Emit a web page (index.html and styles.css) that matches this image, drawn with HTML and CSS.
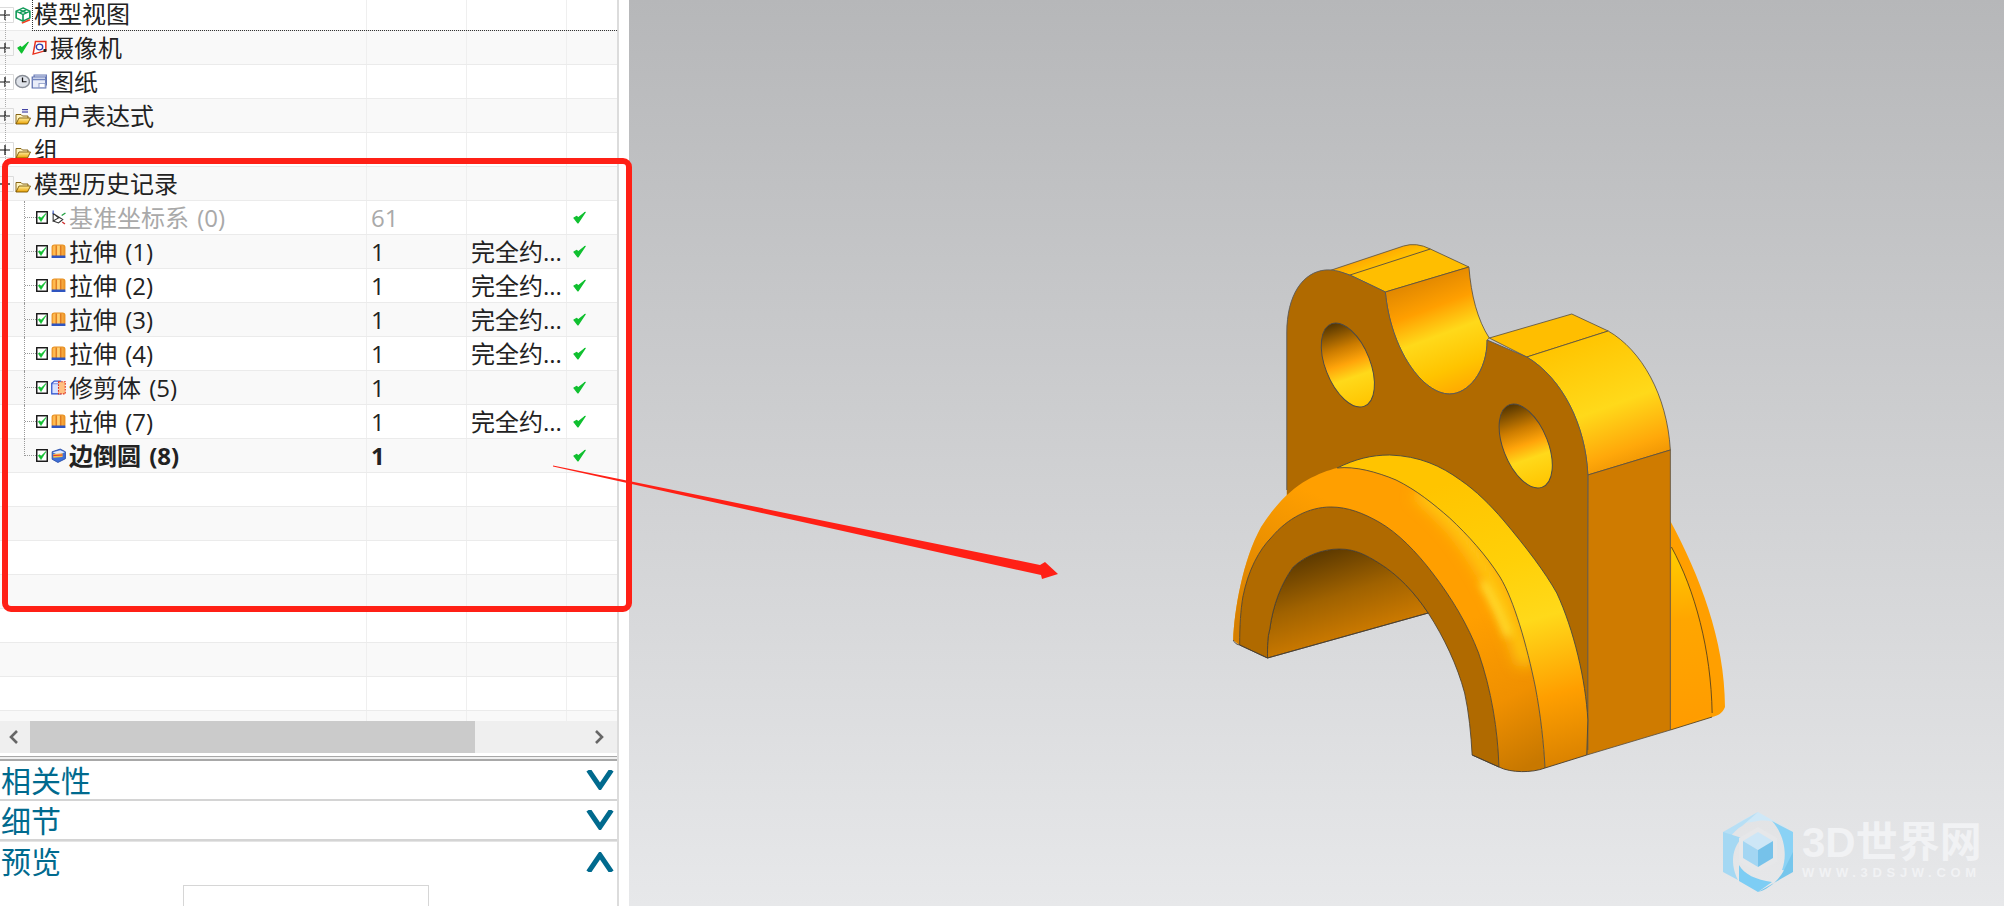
FILE: index.html
```html
<!DOCTYPE html>
<html lang="zh">
<head>
<meta charset="utf-8">
<title>模型历史记录</title>
<link rel="stylesheet" href="styles.css">
</head>
<body>
<svg class="defs" width="0" height="0" aria-hidden="true">
  <defs>
    <linearGradient id="folderG" x1="0" y1="0" x2="0" y2="1"><stop offset="0" stop-color="#fff0a0"/><stop offset="1" stop-color="#eaa000"/></linearGradient>
    <linearGradient id="extrudeG" x1="0" y1="0" x2="1" y2="0"><stop offset="0" stop-color="#ffb040"/><stop offset=".5" stop-color="#ffd070"/><stop offset="1" stop-color="#f09020"/></linearGradient>
    <symbol id="i-plus" viewBox="0 0 14 16" preserveAspectRatio="none"><path d="M13.500 .5H0M13.500 .5V15.500M13.500 15.500H0" fill="none" stroke="#dcdcdc"/><path d="M0 8H10M5 3V13" stroke="#111" stroke-width="1.200" fill="none"/></symbol>
    <symbol id="i-minus" viewBox="0 0 14 16" preserveAspectRatio="none"><path d="M13.500 .5H0M13.500 .5V15.500M13.500 15.500H0" fill="none" stroke="#dcdcdc"/><path d="M0 8H10" stroke="#111" stroke-width="1.200" fill="none"/></symbol>
    <symbol id="i-cube" viewBox="0 0 14 18" preserveAspectRatio="none"><path d="M7 1L13 4.500V11.500L7 15L1 11.500V4.500ZM1 4.500L7 8L13 4.500M7 8V15M4 2.800L10 6.200M10 2.800L4 6.200" fill="none" stroke="#109a58" stroke-width="1.400"/><path d="M6 17L13 13.500" stroke="#f04020" stroke-width="1.600"/></symbol>
    <symbol id="i-check" viewBox="0 0 10 12" preserveAspectRatio="none"><path d="M.8 6.500L3.800 11L9.300 1.200L4 6.500L2.800 5Z" fill="#10c030" stroke="#10c030" stroke-width="1.100" stroke-linejoin="round"/></symbol>
    <symbol id="i-camera" viewBox="0 0 13 15" preserveAspectRatio="none"><path d="M3 1.500H12V10.500L1 14Z" fill="#fff" stroke="#e8301c" stroke-width="1.300"/><circle cx="6.500" cy="7" r="2.800" fill="none" stroke="#3040b0" stroke-width="1.200"/><path d="M10 9H12.500V12H10Z" fill="#222"/></symbol>
    <symbol id="i-clock" viewBox="0 0 13 15" preserveAspectRatio="none"><circle cx="6.500" cy="7.500" r="6" fill="#dfe3ea" stroke="#8a8f98" stroke-width="1.300"/><path d="M6.500 3.500V7.800H10" fill="none" stroke="#111" stroke-width="1.100"/></symbol>
    <symbol id="i-sheet" viewBox="0 0 13 15" preserveAspectRatio="none"><rect x="2.500" y="1" width="10" height="10" fill="#dfe4f4" stroke="#6d7fb8"/><rect x="1" y="3" width="11" height="11" fill="#e9edf9" stroke="#5a6eae"/><path d="M1 5.500H12" stroke="#7285bf" stroke-width="1.500"/><rect x="6.500" y="9.500" width="5" height="4" fill="#fff" stroke="#8d9bc8" stroke-width=".8"/></symbol>
    <symbol id="i-folder" viewBox="0 0 16 12" preserveAspectRatio="none"><path d="M1 11V1.500H6L7.500 3H13V5" fill="#fff4c0" stroke="#7a5600" stroke-width=".9" stroke-linejoin="round"/><path d="M1 11L4 5H15.500L12.500 11Z" fill="url(#folderG)" stroke="#7a5600" stroke-width=".9" stroke-linejoin="round"/></symbol>
    <symbol id="i-folder-x" viewBox="0 0 16 16" preserveAspectRatio="none"><path d="M7 .7H13M7 3H13" stroke="#1a1a90" stroke-width="1"/><path d="M1 15V5.500H6L7.500 7H13V9" fill="#fff4c0" stroke="#7a5600" stroke-width=".9" stroke-linejoin="round"/><path d="M1 15L4 9H15.500L12.500 15Z" fill="url(#folderG)" stroke="#7a5600" stroke-width=".9" stroke-linejoin="round"/></symbol>
    <symbol id="i-box" viewBox="0 0 12 13" preserveAspectRatio="none"><rect x=".75" y=".75" width="10.500" height="11.500" fill="#fff" stroke="#111" stroke-width="1.400"/><path d="M2.300 6.500L5 10.500L10 2.500L5 7.300L3.800 5.800Z" fill="#10c030" stroke="#10c030" stroke-width=".7" stroke-linejoin="round"/></symbol>
    <symbol id="i-datum" viewBox="0 0 14 15" preserveAspectRatio="none"><path d="M2 3.500V11L7 8ZM2 3.500L11 9.500L7 13L2 11" fill="none" stroke="#333" stroke-width="1"/><path d="M2 4V0.500" stroke="#3050c0"/><path d="M10 5.500L13.500 3" stroke="#20a040" stroke-width="1.200"/><path d="M10.500 12L13 14" stroke="#d03030" stroke-width="1.300"/></symbol>
    <symbol id="i-extrude" viewBox="0 0 13 15" preserveAspectRatio="none"><rect x="1" y="1" width="11" height="11.500" rx="2" fill="url(#extrudeG)" stroke="#e89020"/><path d="M4.500 1.500V12M8.500 1.500V12" stroke="#d96a10"/><path d="M.5 11.500H12.500V14H.5Z" fill="#2f55c0"/></symbol>
    <symbol id="i-trim" viewBox="0 0 14 13" preserveAspectRatio="none"><rect x=".7" y="3" width="8" height="9" fill="#d8e2ff" stroke="#3358d0" stroke-width="1.200"/><path d="M.7 3L3 1H9V3" fill="#eef" stroke="#3358d0"/><rect x="7" y="1.500" width="6.300" height="10.500" fill="#ffc080" stroke="#e03020" stroke-width="1" stroke-dasharray="1.500 1"/></symbol>
    <symbol id="i-blend" viewBox="0 0 13 14" preserveAspectRatio="none"><path d="M1 3.500L8 1L12.500 3.500V10L6 13.500L1 10.500Z" fill="#3e6fd8" stroke="#2a4fa8" stroke-width=".8"/><path d="M1.500 4L8 2L12 4L6 6.500Z" fill="#dfe8ff"/><path d="M2 5.500L10 5V8.500L2 9Z" fill="#f6c24a"/><path d="M2 7L10 6.500" stroke="#e83030" stroke-width="1"/></symbol>
  </defs>
</svg>

<div class="app">
  <aside class="panel">
    <section class="tree">
      <div class="row row-first">
        <div class="cell name top"><svg class="exp"><use href="#i-plus"/></svg><svg class="ic-cube"><use href="#i-cube"/></svg><span class="label">模型视图</span></div><div class="cell"></div><div class="cell"></div><div class="cell last"></div>
      </div>
      <div class="row odd">
        <div class="cell name top"><svg class="exp"><use href="#i-plus"/></svg><svg class="tick-lg"><use href="#i-check"/></svg><svg class="ic-cam"><use href="#i-camera"/></svg><span class="label">摄像机</span></div><div class="cell"></div><div class="cell"></div><div class="cell last"></div>
      </div>
      <div class="row">
        <div class="cell name top"><svg class="exp"><use href="#i-plus"/></svg><svg class="ic-clock"><use href="#i-clock"/></svg><svg class="ic-sheet"><use href="#i-sheet"/></svg><span class="label">图纸</span></div><div class="cell"></div><div class="cell"></div><div class="cell last"></div>
      </div>
      <div class="row odd">
        <div class="cell name top"><svg class="exp"><use href="#i-plus"/></svg><svg class="ic-folder-x"><use href="#i-folder-x"/></svg><span class="label">用户表达式</span></div><div class="cell"></div><div class="cell"></div><div class="cell last"></div>
      </div>
      <div class="row">
        <div class="cell name top"><svg class="exp"><use href="#i-plus"/></svg><svg class="ic-folder"><use href="#i-folder"/></svg><span class="label">组</span></div><div class="cell"></div><div class="cell"></div><div class="cell last"></div>
      </div>
      <div class="row odd">
        <div class="cell name"><svg class="exp"><use href="#i-minus"/></svg><svg class="ic-folder"><use href="#i-folder"/></svg><span class="label">模型历史记录</span></div><div class="cell"></div><div class="cell"></div><div class="cell last"></div>
      </div>
      <div class="row muted">
        <div class="cell name"><span class="conn"></span><svg class="chk"><use href="#i-box"/></svg><svg class="ic-feat"><use href="#i-datum"/></svg><span class="label feat">基准坐标系 (0)</span></div><div class="cell num">61</div><div class="cell"></div><div class="cell last"><svg class="tick"><use href="#i-check"/></svg></div>
      </div>
      <div class="row odd">
        <div class="cell name"><span class="conn"></span><svg class="chk"><use href="#i-box"/></svg><svg class="ic-feat"><use href="#i-extrude"/></svg><span class="label feat">拉伸 (1)</span></div><div class="cell num">1</div><div class="cell state">完全约...</div><div class="cell last"><svg class="tick"><use href="#i-check"/></svg></div>
      </div>
      <div class="row">
        <div class="cell name"><span class="conn"></span><svg class="chk"><use href="#i-box"/></svg><svg class="ic-feat"><use href="#i-extrude"/></svg><span class="label feat">拉伸 (2)</span></div><div class="cell num">1</div><div class="cell state">完全约...</div><div class="cell last"><svg class="tick"><use href="#i-check"/></svg></div>
      </div>
      <div class="row odd">
        <div class="cell name"><span class="conn"></span><svg class="chk"><use href="#i-box"/></svg><svg class="ic-feat"><use href="#i-extrude"/></svg><span class="label feat">拉伸 (3)</span></div><div class="cell num">1</div><div class="cell state">完全约...</div><div class="cell last"><svg class="tick"><use href="#i-check"/></svg></div>
      </div>
      <div class="row">
        <div class="cell name"><span class="conn"></span><svg class="chk"><use href="#i-box"/></svg><svg class="ic-feat"><use href="#i-extrude"/></svg><span class="label feat">拉伸 (4)</span></div><div class="cell num">1</div><div class="cell state">完全约...</div><div class="cell last"><svg class="tick"><use href="#i-check"/></svg></div>
      </div>
      <div class="row odd">
        <div class="cell name"><span class="conn"></span><svg class="chk"><use href="#i-box"/></svg><svg class="ic-feat"><use href="#i-trim"/></svg><span class="label feat">修剪体 (5)</span></div><div class="cell num">1</div><div class="cell"></div><div class="cell last"><svg class="tick"><use href="#i-check"/></svg></div>
      </div>
      <div class="row">
        <div class="cell name"><span class="conn"></span><svg class="chk"><use href="#i-box"/></svg><svg class="ic-feat"><use href="#i-extrude"/></svg><span class="label feat">拉伸 (7)</span></div><div class="cell num">1</div><div class="cell state">完全约...</div><div class="cell last"><svg class="tick"><use href="#i-check"/></svg></div>
      </div>
      <div class="row odd strong">
        <div class="cell name"><span class="conn conn-end"></span><svg class="chk"><use href="#i-box"/></svg><svg class="ic-feat"><use href="#i-blend"/></svg><span class="label feat">边倒圆 (8)</span></div><div class="cell num">1</div><div class="cell"></div><div class="cell last"><svg class="tick"><use href="#i-check"/></svg></div>
      </div>
      <div class="row"><div class="cell name"></div><div class="cell"></div><div class="cell"></div><div class="cell last"></div></div>
      <div class="row odd"><div class="cell name"></div><div class="cell"></div><div class="cell"></div><div class="cell last"></div></div>
      <div class="row"><div class="cell name"></div><div class="cell"></div><div class="cell"></div><div class="cell last"></div></div>
      <div class="row odd"><div class="cell name"></div><div class="cell"></div><div class="cell"></div><div class="cell last"></div></div>
      <div class="row"><div class="cell name"></div><div class="cell"></div><div class="cell"></div><div class="cell last"></div></div>
      <div class="row odd"><div class="cell name"></div><div class="cell"></div><div class="cell"></div><div class="cell last"></div></div>
      <div class="row"><div class="cell name"></div><div class="cell"></div><div class="cell"></div><div class="cell last"></div></div>
      <div class="row odd"><div class="cell name"></div><div class="cell"></div><div class="cell"></div><div class="cell last"></div></div>
    </section>
    <div class="hscroll">
      <svg class="arrow-btn" viewBox="0 0 30 16"><path d="M17 2L11 8L17 14" fill="none" stroke="#666" stroke-width="2.600"/></svg>
      <div class="track"><div class="thumb"></div></div>
      <svg class="arrow-btn" viewBox="0 0 30 16"><path d="M9 2L15 8L9 14" fill="none" stroke="#666" stroke-width="2.600"/></svg>
    </div>
    <div class="sep"></div>
    <div class="section"><span>相关性</span><svg class="chev" viewBox="0 0 28 20"><path d="M2.500 0L14 17L25.500 0" fill="none" stroke="#006a8e" stroke-width="5"/></svg></div>
    <div class="section"><span>细节</span><svg class="chev" viewBox="0 0 28 20"><path d="M2.500 0L14 17L25.500 0" fill="none" stroke="#006a8e" stroke-width="5"/></svg></div>
    <div class="section open"><span>预览</span><svg class="chev" viewBox="0 0 28 20"><path d="M2.500 20L14 3L25.500 20" fill="none" stroke="#006a8e" stroke-width="5"/></svg></div>
    <div class="preview"><div class="preview-box"></div></div>
  </aside>
  <div class="gutter"></div>
  <main class="viewport">
    <svg class="model" viewBox="629 0 1375 906" role="img" aria-label="三维模型">
      <defs>
        <linearGradient id="gCut" gradientUnits="userSpaceOnUse" x1="1398" y1="270" x2="1450" y2="400">
          <stop offset="0" stop-color="#d67f00"/><stop offset=".3" stop-color="#ff9f00"/><stop offset=".5" stop-color="#ffd91a"/><stop offset=".75" stop-color="#ffc400"/><stop offset="1" stop-color="#ff9f00"/>
        </linearGradient>
        <linearGradient id="gHole" x1=".5" y1="0" x2=".5" y2="1">
          <stop offset="0" stop-color="#523400"/><stop offset=".3" stop-color="#cc7c00"/><stop offset=".48" stop-color="#ffa40a"/><stop offset=".65" stop-color="#ffd91a"/><stop offset="1" stop-color="#ffc400"/>
        </linearGradient>
        <linearGradient id="gRight" gradientUnits="userSpaceOnUse" x1="1545" y1="340" x2="1600" y2="480">
          <stop offset="0" stop-color="#ffc400"/><stop offset=".5" stop-color="#ffd91a"/><stop offset=".8" stop-color="#ffa80a"/><stop offset="1" stop-color="#e68a00"/>
        </linearGradient>
        <linearGradient id="gTop" gradientUnits="userSpaceOnUse" x1="1360" y1="250" x2="1372" y2="280">
          <stop offset="0" stop-color="#ff9f00"/><stop offset=".5" stop-color="#ffbe00"/><stop offset="1" stop-color="#ffbe00"/>
        </linearGradient>
        <linearGradient id="gRim" gradientUnits="userSpaceOnUse" x1="1440" y1="480" x2="1530" y2="775">
          <stop offset="0" stop-color="#ffc400"/><stop offset=".3" stop-color="#ffd008"/><stop offset=".5" stop-color="#ffd91a"/><stop offset=".75" stop-color="#ff9f00"/><stop offset="1" stop-color="#d67f00"/>
        </linearGradient>
        <linearGradient id="gFillet" gradientUnits="userSpaceOnUse" x1="1330" y1="470" x2="1500" y2="770">
          <stop offset="0" stop-color="#ff9f00"/><stop offset=".55" stop-color="#ff9f00"/><stop offset=".8" stop-color="#f09000"/><stop offset="1" stop-color="#c87800"/>
        </linearGradient>
        <linearGradient id="gFilletLeft" gradientUnits="userSpaceOnUse" x1="1232" y1="620" x2="1300" y2="490">
          <stop offset="0" stop-color="#d67f00"/><stop offset="1" stop-color="#d67f00" stop-opacity="0"/>
        </linearGradient>
        <linearGradient id="gInner" gradientUnits="userSpaceOnUse" x1="1315" y1="550" x2="1345" y2="640">
          <stop offset="0" stop-color="#5c3900"/><stop offset=".5" stop-color="#a06200"/><stop offset="1" stop-color="#d07c00"/>
        </linearGradient>
        <linearGradient id="gBack" gradientUnits="userSpaceOnUse" x1="1650" y1="550" x2="1675" y2="720">
          <stop offset="0" stop-color="#ffcc00"/><stop offset=".4" stop-color="#ffa600"/><stop offset="1" stop-color="#ff9c00"/>
        </linearGradient>
        <filter id="soft" x="-30%" y="-30%" width="160%" height="160%"><feGaussianBlur stdDeviation="7"/></filter>
        <filter id="soft2" x="-50%" y="-50%" width="200%" height="200%"><feGaussianBlur stdDeviation="4"/></filter>
        <clipPath id="clipFillet"><path d="M1231 640C1232 610 1240 560 1257 527C1270 505 1285 489 1300 480C1310 474 1320 470 1328 468C1345 466 1365 472 1383 480C1402 490 1418 504 1433 518C1450 535 1467 555 1480 577C1493 600 1505 645 1513 687C1518 715 1521 745 1522 768C1510 773 1490 773 1479 767C1478 730 1472 690 1460 653C1450 625 1435 598 1417 573C1402 552 1385 533 1367 522C1352 513 1338 507 1322 507C1302 507 1282 518 1267 537C1255 550 1245 570 1240 597C1238 610 1237 625 1237 645Z"/></clipPath>
      </defs>
      <g class="model-body" transform="translate(1200 0) scale(1.0714 1) translate(-1200 0)" stroke-linejoin="round">
        <!-- far arch behind the block -->
        <path d="M1639 521C1666 575 1690 640 1690 707C1688 713 1683 716 1678 717L1639 730Z" fill="#ff9f00"/>
        <path d="M1640 547C1662 590 1677 650 1678 713L1639 730Z" fill="url(#gBack)"/>
        <path d="M1640 547C1662 590 1677 650 1678 713" fill="none" stroke="#4a3a20" stroke-width=".8"/>
        <path d="M1678 717L1639 730" fill="none" stroke="#4a3a20" stroke-width=".8"/>
        <!-- top faces -->
        <path d="M1320 271L1390 246Q1402 242 1415 249L1451 267L1373 292L1340 275Q1330 271 1320 271Z" fill="url(#gTop)" stroke="#5a5040" stroke-width=".8"/>
        <path d="M1340 275L1415 249" stroke="#5a5040" stroke-width=".9" fill="none"/>
        <path d="M1470 338L1547 314L1581 331L1505 357Z" fill="#ffbe00" stroke="#5a5040" stroke-width=".8"/>
        <!-- concave cut -->
        <path d="M1373 292L1451 267C1453 295 1459 320 1470 338L1468 340C1468 372 1450 394 1433 394C1408 394 1378 350 1373 292Z" fill="url(#gCut)" stroke="#5a5040" stroke-width=".8"/>
        <!-- right curved surface and front block -->
        <path d="M1505 357L1581 331C1612 350 1636 395 1639 450L1562 475C1560 425 1538 378 1505 357Z" fill="url(#gRight)" stroke="#5a5040" stroke-width=".8"/>
        <path d="M1562 475L1639 450V730L1561 755Z" fill="#cf7b00" stroke="#5a5040" stroke-width=".8"/>
        <!-- back plate -->
        <path d="M1281 505V333C1281 295 1296 272 1317 270C1330 269 1340 275 1373 292C1378 350 1408 394 1433 394C1450 394 1468 372 1468 340L1505 357C1538 378 1560 425 1562 475V750L1530 660L1450 535L1380 500L1300 500Z" fill="#b06a00"/>
        <path d="M1281 490V333C1281 295 1296 272 1317 270C1330 269 1340 275 1373 292C1378 350 1408 394 1433 394C1450 394 1468 372 1468 340L1505 357C1538 378 1560 425 1562 475V750" fill="none" stroke="#5a5a5a" stroke-width=".9"/>
        <ellipse cx="1338" cy="365" rx="21" ry="44" transform="rotate(-20 1338 365)" fill="url(#gHole)" stroke="#4a4a4a" stroke-width=".9"/>
        <ellipse cx="1504" cy="446" rx="21" ry="44" transform="rotate(-20 1504 446)" fill="url(#gHole)" stroke="#4a4a4a" stroke-width=".9"/>
        <!-- inside of arch -->
        <path d="M1263 658C1263 645 1263 637 1265 630C1268 605 1276 583 1287 567C1299 555 1315 549 1330 549C1345 549 1355 555 1367 563C1385 575 1400 592 1413 613Z" fill="url(#gInner)" stroke="#4a4030" stroke-width=".8"/>
        <!-- rim band -->
        <path d="M1328 468C1345 459 1360 455 1377 455C1405 456 1425 466 1443 480C1458 491 1471 505 1483 520C1505 548 1522 572 1533 593C1549 630 1560 680 1562 720L1561 755L1522 768C1521 745 1518 715 1513 687C1505 645 1493 600 1480 577C1467 555 1450 535 1433 518C1418 504 1402 490 1383 480C1365 472 1345 466 1328 468Z" fill="url(#gRim)"/>
        <path d="M1328 468C1345 459 1360 455 1377 455C1405 456 1425 466 1443 480C1458 491 1471 505 1483 520C1505 548 1522 572 1533 593C1549 630 1560 680 1562 720L1561 755" fill="none" stroke="#4a4a40" stroke-width=".9"/>
        <!-- fillet -->
        <path d="M1231 640C1232 610 1240 560 1257 527C1270 505 1285 489 1300 480C1310 474 1320 470 1328 468C1345 466 1365 472 1383 480C1402 490 1418 504 1433 518C1450 535 1467 555 1480 577C1493 600 1505 645 1513 687C1518 715 1521 745 1522 768C1510 773 1490 773 1479 767C1478 730 1472 690 1460 653C1450 625 1435 598 1417 573C1402 552 1385 533 1367 522C1352 513 1338 507 1322 507C1302 507 1282 518 1267 537C1255 550 1245 570 1240 597C1238 610 1237 625 1237 645Z" fill="url(#gFillet)"/>
        <path d="M1231 640C1232 610 1240 560 1257 527C1270 505 1285 489 1300 480L1322 507C1302 507 1282 518 1267 537C1255 550 1245 570 1240 597C1238 610 1237 625 1237 645Z" fill="url(#gFilletLeft)"/>
        <g clip-path="url(#clipFillet)">
          <path d="M1405 492C1440 520 1478 570 1505 665" fill="none" stroke="#ffcc14" stroke-width="15" filter="url(#soft)"/>
          <path d="M1464 582C1474 600 1482 618 1488 636" fill="none" stroke="#fff040" stroke-width="6" opacity=".85" filter="url(#soft2)"/>
        </g>
        <path d="M1328 468C1345 466 1365 472 1383 480C1402 490 1418 504 1433 518C1450 535 1467 555 1480 577C1493 600 1505 645 1513 687C1518 715 1521 745 1522 768" fill="none" stroke="#4a4a40" stroke-width=".8"/>
        <!-- front face -->
        <path d="M1237 645C1237 625 1238 610 1240 597C1245 570 1255 550 1267 537C1282 518 1302 507 1322 507C1338 507 1352 513 1367 522C1385 533 1402 552 1417 573C1435 598 1450 625 1460 653C1472 690 1478 730 1479 767L1454 755C1453 735 1451 712 1447 693C1440 665 1428 638 1413 613C1400 592 1385 575 1367 563C1355 555 1345 549 1330 549C1315 549 1299 555 1287 567C1276 583 1268 605 1265 630C1263 637 1263 645 1263 658Z" fill="#b06a00" stroke="#4a4030" stroke-width=".8"/>
        <path d="M1231 640C1232 642 1233 644 1237 645L1263 658L1413 613" fill="none" stroke="#4a4030" stroke-width=".9"/>
        <path d="M1454 755L1479 767C1490 773 1510 773 1522 768L1561 755" fill="none" stroke="#4a4030" stroke-width=".9"/>
      </g>
    </svg>
    <div class="logo">
      <svg class="logo-mark" viewBox="0 0 72 80">
        <path d="M36 0L66 17C58 10 44 6 30 10L14 12Z" fill="#cfe8f7"/>
        <path d="M36 0L1 20V60L4 40C5 28 10 20 20 14Z" fill="#b7dff5"/>
        <path d="M50 9L71 20V60L60 58C66 42 62 22 50 9Z" fill="#8ad2f5"/>
        <path d="M1 20L1 60L16 68C8 52 10 36 20 26Z" fill="#a4d8f3"/>
        <path d="M71 40V60L36 80C44 78 56 70 62 58Z" fill="#76c6ec"/>
        <path d="M17 53C22 62 34 68 50 70L36 80L17 69Z" fill="#7dcdf4"/>
        <path d="M36 15L55 26V50L36 60L17 50V26Z" fill="#e6e7e9"/>
        <path d="M36 20L51 29L36 38L21 29Z" fill="#cde6f6"/>
        <path d="M21 29L36 38V55L21 46Z" fill="#a3d6f3"/>
        <path d="M51 29L36 38V55L51 46Z" fill="#76c2ea"/>
      </svg>
      <div class="logo-text">
        <span class="logo-name">3D世界网</span>
        <span class="logo-url">WWW.3DSJW.COM</span>
      </div>
    </div>
  </main>
</div>

<svg class="annot" viewBox="0 0 2004 906" aria-hidden="true">
  <rect x="5" y="161" width="624" height="448" rx="6" fill="none" stroke="#ff2016" stroke-width="6"/>
  <path d="M553 465.500L1040 565L1045 562L1058 574L1042 579L1041 575L553 466.500Z" fill="#ff2016"/>
</svg>
</body>
</html>
```
FILE: styles.css
```css
* { box-sizing: border-box; }
html, body { margin: 0; height: 100%; overflow: hidden; }
body {
  font-family: "Open Sans", "Noto Sans CJK SC", sans-serif;
  font-size: 24px;
  color: #222;
  background: #fff;
  position: relative;
}
.defs { position: absolute; }
.app { display: flex; height: 906px; width: 2004px; }
.panel { width: 619px; flex: none; border-right: 2px solid #dcdcdc; display: flex; flex-direction: column; background: #fff; overflow: hidden; }
.gutter { width: 10px; flex: none; background: #fff; }
.viewport { flex: 1; position: relative; background: linear-gradient(#b6b7b9, #e7e8ea); }
.model { display: block; width: 100%; height: 100%; }

.tree { height: 721px; flex: none; overflow: hidden; }
.row { display: grid; grid-template-columns: 367px 100px 100px 50px; height: 34px; border-bottom: 1px solid #ebebeb; }
.row-first { height: 31px; position: relative; }
.row-first::after { content: ""; position: absolute; left: 32px; right: 0; top: 0; bottom: -1px; border-left: 1px dotted #333; border-bottom: 1px dotted #333; }
.row-first .label { font-family: "Liberation Sans", "Noto Sans CJK SC", sans-serif; line-height: 28px; }
.row.odd { background: #f9f9f9; }
.cell { display: flex; align-items: center; border-right: 1px solid #efefef; white-space: nowrap; line-height: 30px; min-width: 0; }
.cell.last { border-right: 0; padding-left: 6px; }
.cell.top { position: relative; }
.cell.top::before { content: ""; position: absolute; left: 5px; top: -17px; bottom: -17px; border-left: 1px dotted #aaa; }
.row-first .cell.top::before { top: 15px; }
.cell.num { padding-left: 4px; }
.cell.state { padding-left: 4px; }
.muted { color: #a9a9a9; }
.strong { font-weight: 700; }
.exp { width: 14px; height: 16px; flex: none; position: relative; background: inherit; }
.ic-cube { width: 16px; height: 17px; flex: none; margin-left: 1px; }
.tick-lg { width: 12px; height: 13px; flex: none; margin-left: 3px; }
.ic-cam { width: 15px; height: 15px; flex: none; margin-left: 3px; }
.ic-clock { width: 15px; height: 15px; flex: none; margin-left: 1px; }
.ic-sheet { width: 16px; height: 15px; flex: none; margin-left: 1px; }
.ic-folder { width: 16px; height: 12px; flex: none; margin-left: 1px; margin-top: 6px; }
.ic-folder-x { width: 16px; height: 16px; flex: none; margin-left: 1px; margin-top: 2px; }
.label { margin-left: 3px; }
.feat { margin-left: 3px; word-spacing: 2px; }
.conn { position: relative; align-self: stretch; flex: none; width: 12px; margin-left: 24px; border-left: 1px dotted #999; margin-bottom: -1px; }
.conn::after { content: ""; position: absolute; left: 0; width: 11px; top: 16px; border-top: 1px dotted #999; }
.conn-end { margin-bottom: 16px; }
.chk { width: 12px; height: 13px; flex: none; }
.ic-feat { width: 15px; height: 15px; flex: none; margin-left: 3px; }
.tick { width: 13px; height: 13px; display: block; }

.hscroll { height: 32px; flex: none; display: flex; align-items: stretch; background: #efefef; }
.arrow-btn { width: 30px; height: 16px; flex: none; align-self: center; }
.track { flex: 1; }
.thumb { width: 445px; height: 100%; background: #cbcbcb; }
.sep { height: 5px; margin-top: 3px; flex: none; border: 1px solid #a8a8a8; border-width: 1px 0 2px; background: #f0f0f0; }
.section { height: 40px; flex: none; border-bottom: 2px solid #d4d4d4; display: flex; align-items: center; justify-content: space-between; padding: 0 3px 0 1px; color: #006a8e; font-size: 30px; line-height: 38px; }
.section span { padding-top: 2px; }
.section.open { border-bottom: 0; border-top: 1px solid #e4e4e4; height: 44px; padding-bottom: 4px; }
.section.open span { padding-top: 0; }
.chev { width: 28px; height: 20px; flex: none; }
.preview { flex: 1; display: flex; padding-left: 183px; min-height: 0; }
.preview-box { width: 246px; height: 40px; border: 1px solid #d6d6d6; }

.logo { position: absolute; left: 1093px; top: 812px; display: flex; align-items: center; gap: 8px; }
.logo-mark { width: 72px; height: 80px; flex: none; }
.logo-text { display: flex; flex-direction: column; margin-top: -4px; }
.logo-name { font-family: "Liberation Sans", "Noto Sans CJK SC", sans-serif; font-weight: 700; font-size: 42px; line-height: 46px; color: #f1f2f4; white-space: nowrap; }
.logo-url { font-family: "Liberation Sans", sans-serif; font-weight: 700; font-size: 13px; letter-spacing: 4.7px; line-height: 14px; color: #f1f2f4; white-space: nowrap; }

.annot { position: absolute; left: 0; top: 0; width: 2004px; height: 906px; pointer-events: none; }
```
